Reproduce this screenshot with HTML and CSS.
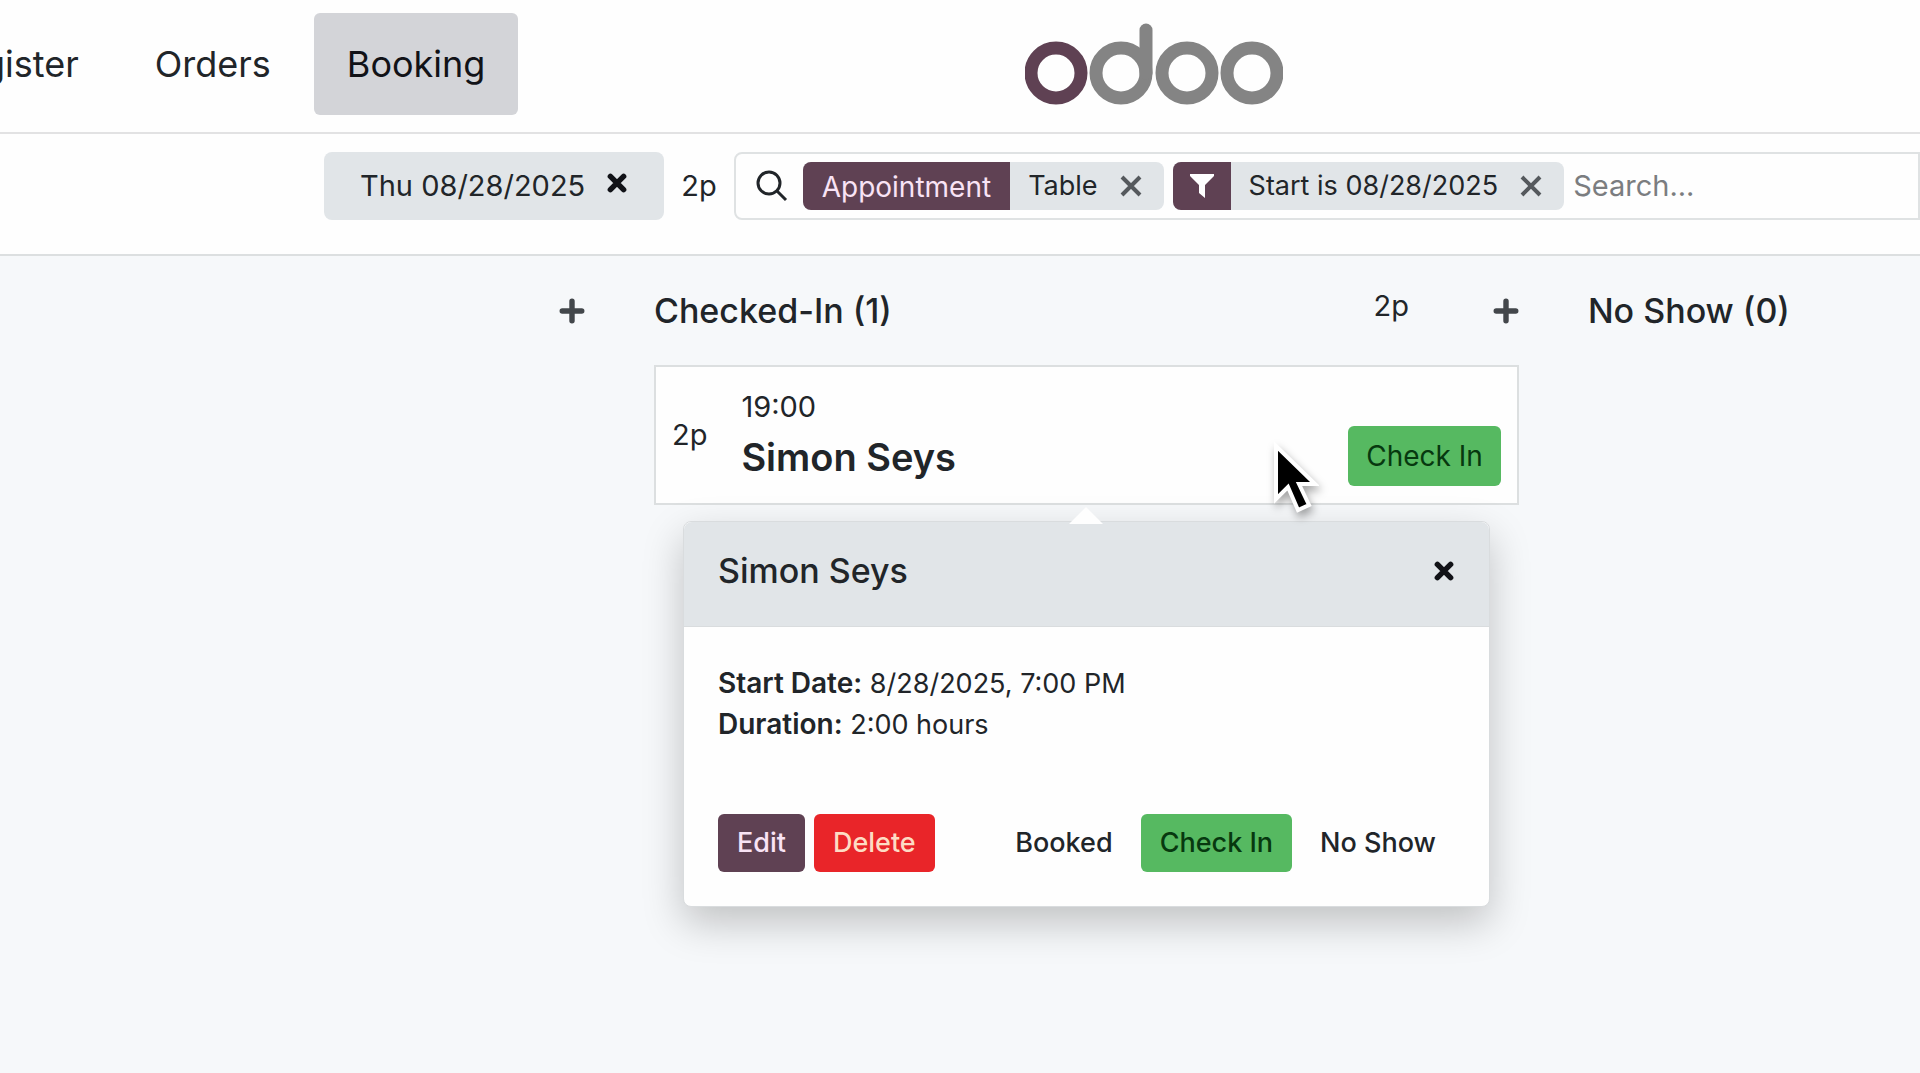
FILE: index.html
```html
<!DOCTYPE html>
<html lang="en">
<head>
    <meta charset="UTF-8">
    <meta name="viewport" content="width=device-width, initial-scale=1.0">
    <title>Booking</title>
    <link rel="stylesheet" href="styles.css">
</head>
<body>
    <header class="topbar">
        <nav class="main-nav">
            <button type="button" class="nav-btn">Register</button>
            <button type="button" class="nav-btn">Orders</button>
            <button type="button" class="nav-btn active">Booking</button>
        </nav>
        <svg class="logo" viewBox="0 0 258 82" role="img" aria-label="odoo">
            <g fill="none" stroke="#848484" stroke-width="13">
                <circle cx="31" cy="50" r="25" stroke="#5f4153"/>
                <circle cx="96" cy="50" r="25"/>
                <path d="M121 50V7" stroke-linecap="round"/>
                <circle cx="162" cy="50" r="25"/>
                <circle cx="227" cy="50" r="25"/>
            </g>
        </svg>
    </header>

    <section class="control-panel">
        <button type="button" class="date-btn">
            Thu 08/28/2025
            <svg class="icon-times" viewBox="0 0 20 20"><path d="M4 4l12 12M16 4L4 16"/></svg>
        </button>
        <span class="guests">2p</span>
        <div class="search-box">
            <svg class="icon-search" viewBox="0 0 32 32"><circle cx="13" cy="13" r="11"/><path d="M21 21l9 9"/></svg>
            <div class="facet">
                <span class="facet-label">Appointment</span>
                <span class="facet-value">Table</span>
                <button type="button" class="facet-remove" aria-label="Remove">
                    <svg viewBox="0 0 22 22"><path d="M2 2l18 18M20 2L2 20"/></svg>
                </button>
            </div>
            <div class="facet">
                <span class="facet-label facet-icon">
                    <svg viewBox="0 0 24 24"><path d="M0 0h24v2l-9 9v13l-6-5v-8L0 2z"/></svg>
                </span>
                <span class="facet-value">Start is 08/28/2025</span>
                <button type="button" class="facet-remove" aria-label="Remove">
                    <svg viewBox="0 0 22 22"><path d="M2 2l18 18M20 2L2 20"/></svg>
                </button>
            </div>
            <input type="text" class="search-input" placeholder="Search..." aria-label="Search">
        </div>
    </section>

    <main class="board">
        <section class="column">
            <div class="column-header">
                <button type="button" class="add-btn" aria-label="Add">
                    <svg viewBox="0 0 24 24"><path d="M12 3v18M3 12h18"/></svg>
                </button>
            </div>
        </section>

        <section class="column">
            <div class="column-header">
                <h2>Checked-In (1)</h2>
                <span class="guests">2p</span>
                <button type="button" class="add-btn" aria-label="Add">
                    <svg viewBox="0 0 24 24"><path d="M12 3v18M3 12h18"/></svg>
                </button>
            </div>

            <article class="card">
                <span class="guests">2p</span>
                <div class="card-info">
                    <span>19:00</span>
                    <strong>Simon Seys</strong>
                </div>
                <button type="button" class="btn btn-success">Check In</button>

                <div class="popover">
                    <div class="popover-header">
                        <h3>Simon Seys</h3>
                        <button type="button" class="popover-close" aria-label="Close">
                            <svg class="icon-times" viewBox="0 0 20 20"><path d="M4 4l12 12M16 4L4 16"/></svg>
                        </button>
                    </div>
                    <div class="popover-body">
                        <p><b>Start Date:</b> 8/28/2025, 7:00 PM</p>
                        <p><b>Duration:</b> 2:00 hours</p>
                    </div>
                    <div class="popover-footer">
                        <button type="button" class="btn btn-primary">Edit</button>
                        <button type="button" class="btn btn-danger">Delete</button>
                        <div class="status-buttons">
                            <button type="button" class="btn">Booked</button>
                            <button type="button" class="btn btn-success">Check In</button>
                            <button type="button" class="btn">No Show</button>
                        </div>
                    </div>
                </div>

                <svg class="cursor" viewBox="0 0 48 76">
                    <path d="M5 6v53l12-12 10 23 11-5-10-21h16z"/>
                </svg>
            </article>
        </section>

        <section class="column">
            <div class="column-header">
                <h2>No Show (0)</h2>
            </div>
        </section>
    </main>
</body>
</html>
```
FILE: styles.css
```css
* {
    box-sizing: border-box;
}

body {
    margin: 0;
    min-height: 100vh;
    overflow: hidden;
    background-color: #f6f8fa;
    color: #212529;
    font-family: Inter, "Liberation Sans", sans-serif;
    font-size: 29px;
    line-height: 40px;
}

button {
    padding: 0;
    border: none;
    background: none;
    color: inherit;
    font: inherit;
    white-space: nowrap;
    cursor: pointer;
}

h2, h3, p {
    margin: 0;
}

svg {
    display: block;
    flex: none;
}

/* Top bar */
.topbar {
    display: flex;
    align-items: center;
    padding: 13px 0 17px;
    background-color: #fefefe;
    border-bottom: 2px solid #e2e2e3;
}

.main-nav {
    display: flex;
    flex: 0 0 27%;
    justify-content: flex-end;
    gap: 10px;
    min-width: 0;
}

.nav-btn {
    padding: 31px 33px;
    border-radius: 6px;
    font-size: 36px;
}

.nav-btn.active {
    background-color: #d3d4d8;
    color: #111217;
}

.logo {
    width: 258px;
    height: 82px;
    margin-left: 26.4%;
}

/* Control panel */
.control-panel {
    display: flex;
    align-items: center;
    gap: 17px;
    padding: 18px 0 34px 324px;
    background-color: #fefefe;
    border-bottom: 2px solid #dcdfe0;
}

.date-btn {
    display: flex;
    gap: 21px;
    padding: 14px 36px;
    border-radius: 8px;
    background-color: #e1e5e8;
}

.icon-times {
    width: 22px;
    height: 22px;
    margin-top: 6px;
    fill: none;
    stroke: #111217;
    stroke-width: 5;
    stroke-linecap: round;
}

.search-box {
    display: flex;
    flex: 1;
    align-items: center;
    gap: 9px;
    min-width: 0;
    padding: 8px 0 8px 20px;
    border: 2px solid #dfe2e3;
    border-radius: 8px 0 0 8px;
}

.icon-search {
    width: 32px;
    height: 32px;
    margin-right: 6px;
    fill: none;
    stroke: #212529;
    stroke-width: 3;
}

.facet {
    display: flex;
    align-items: center;
    overflow: hidden;
    border-radius: 8px;
    background-color: #e1e5e8;
    white-space: nowrap;
}

.facet-label {
    padding: 5px 19px 3px;
    background-color: #5f4153;
    color: #f9e3f5;
    font-size: 28px;
}

.facet-icon {
    padding: 12px 17px;
    fill: #fff;
}

.facet-icon svg {
    width: 24px;
    height: 24px;
}

.facet-value {
    padding: 0 0 0 18px;
    font-size: 27px;
}

.facet-remove {
    padding: 0 22px;
}

.facet-remove svg {
    width: 22px;
    height: 22px;
    fill: none;
    stroke: #55595d;
    stroke-width: 4;
}

.search-input {
    flex: 1;
    min-width: 0;
    padding: 0;
    border: none;
    outline: none;
    background: none;
    font: inherit;
}

.search-input::placeholder {
    color: #7b7d80;
}

/* Board */
.board {
    display: grid;
    grid-auto-flow: column;
    grid-auto-columns: 45.05vw;
    gap: 69px;
    margin-left: -280px;
    padding-top: 27px;
}

.column-header {
    display: flex;
    align-items: center;
    justify-content: flex-end;
    height: 56px;
    margin-bottom: 26px;
}

.column-header h2 {
    margin-right: auto;
    font-size: 34px;
    font-weight: 500;
}

.column-header .guests {
    padding: 0 84px 10px 0;
}

.add-btn svg {
    width: 26px;
    height: 26px;
    fill: none;
    stroke: #43474b;
    stroke-width: 5;
    stroke-linecap: round;
}

.card {
    position: relative;
    display: flex;
    align-items: center;
    padding: 18px 16px;
    border: 2px solid #dcdfe0;
    background-color: #fefefe;
}

.card-info {
    display: flex;
    flex: 1;
    flex-direction: column;
    gap: 10px;
    padding: 2px 0 8px 34px;
}

.card-info strong {
    font-size: 38px;
    font-weight: 600;
}

.btn {
    padding: 9px 19px;
    border-radius: 6px;
    font-size: 27px;
    font-weight: 500;
}

.card > .btn {
    align-self: flex-end;
    padding: 10px 18px;
    margin-bottom: -1px;
    font-size: 28px;
    font-weight: 400;
}

.btn-primary {
    background-color: #5f4153;
    color: #f9e3f5;
}

.btn-danger {
    background-color: #e92529;
    color: #fddcc4;
}

.btn-success {
    background-color: #56b961;
    color: #07380f;
}

/* Booking details */
.popover {
    position: absolute;
    top: calc(100% + 18px);
    left: 27px;
    right: 27px;
    border: 1px solid #d9dcde;
    border-radius: 8px;
    background-color: #fefefe;
    box-shadow: 0 16px 40px rgba(0, 0, 0, 0.22);
}

.popover::before {
    content: "";
    position: absolute;
    bottom: calc(100% - 2px);
    left: 50%;
    margin-left: -17px;
    border: 17px solid transparent;
    border-top: none;
    border-bottom-color: #fefefe;
}

.popover-header {
    display: flex;
    align-items: center;
    justify-content: space-between;
    padding: 29px 34px 35px;
    border-bottom: 1px solid #d9dcde;
    border-radius: 8px 8px 0 0;
    background-color: #e1e5e8;
}

.popover-header h3 {
    font-size: 34px;
    font-weight: 500;
}

.popover-close .icon-times {
    margin-top: 0;
}

.popover-body {
    padding: 36px 34px;
    font-size: 27px;
}

.popover-body b {
    font-size: 28px;
    font-weight: 600;
}

.popover-footer {
    display: flex;
    gap: 9px;
    padding: 33px 34px 34px;
}

.status-buttons {
    display: flex;
    gap: 9px;
    margin-left: auto;
}

.cursor {
    position: absolute;
    top: 73px;
    left: 615px;
    width: 48px;
    height: 76px;
    stroke: #fff;
    stroke-width: 4;
    filter: drop-shadow(2px 5px 4px rgba(0, 0, 0, 0.35));
}
```
